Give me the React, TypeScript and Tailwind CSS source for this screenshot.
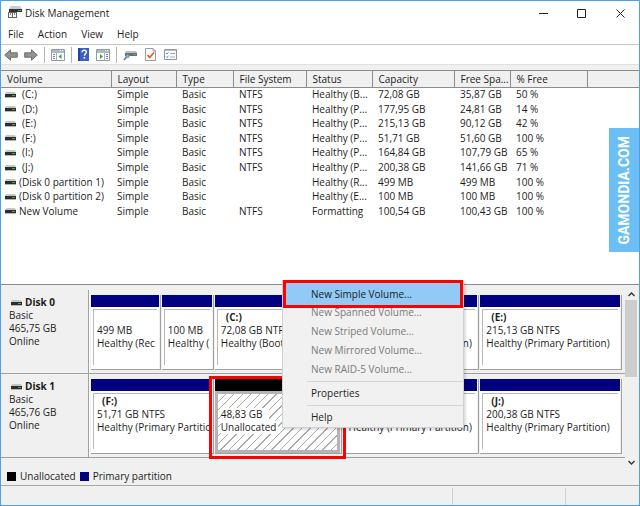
import React from "react";

type Volume = [string, string, string, string, string, string];

const volumes: Volume[] = [
  ["(C:)", "NTFS", "Healthy (B...", "72,08 GB", "35,87 GB", "50 %"],
  ["(D:)", "NTFS", "Healthy (P...", "177,95 GB", "24,81 GB", "14 %"],
  ["(E:)", "NTFS", "Healthy (P...", "215,13 GB", "90,12 GB", "42 %"],
  ["(F:)", "NTFS", "Healthy (P...", "51,71 GB", "51,60 GB", "100 %"],
  ["(I:)", "NTFS", "Healthy (P...", "164,84 GB", "107,79 GB", "65 %"],
  ["(J:)", "NTFS", "Healthy (P...", "200,38 GB", "141,66 GB", "71 %"],
  ["(Disk 0 partition 1)", "", "Healthy (R...", "499 MB", "499 MB", "100 %"],
  ["(Disk 0 partition 2)", "", "Healthy (E...", "100 MB", "100 MB", "100 %"],
  ["New Volume", "NTFS", "Formatting", "100,54 GB", "100,43 GB", "100 %"],
];

const headings = ["Volume", "Layout", "Type", "File System", "Status", "Capacity", "Free Spa...", "% Free", ""];

function DriveIcon() {
  return (
    <svg className="h-[8px] w-[11px] shrink-0" viewBox="0 0 11 8" aria-hidden="true">
      <path d="M1 1h9l1 2H0z" fill="#c4c6c9" />
      <path d="M0 3h11v3H0z" fill="#2b2d2e" />
      <path d="M0 6h11v1H0z" fill="#b4b6b8" />
      <path d="M7 4h3v1H7z" fill="#3fae3f" />
    </svg>
  );
}

function AppIcon() {
  return (
    <svg className="h-4 w-4" viewBox="0 0 16 16" aria-hidden="true">
      <path d="M4 1h9l2 3H2z" fill="#c9cbcd" />
      <path d="M2 4h13v3H2z" fill="#303234" />
      <path d="M11 5h3v1h-3z" fill="#44b544" />
      <path d="M1 7h9v6H1z" fill="#606366" />
      <path d="M2 8h3v4H2zM6 8h3v4H6z" fill="#fafafa" />
      <path d="M3 8h1v2H3zM7 8h1v2H7z" fill="#888" />
    </svg>
  );
}

function Arrow({ right = false }: { right?: boolean }) {
  return (
    <svg className={right ? "h-3 w-[14px] rotate-180" : "h-3 w-[14px]"} viewBox="0 0 14 12" aria-hidden="true">
      <path d="M.7 6 6.5.8v3h6.8v4.4H6.5v3z" fill="#929292" stroke="#6c6c6c" strokeWidth="1" />
    </svg>
  );
}

function PaneIcon({ mirrored = false }: { mirrored?: boolean }) {
  return (
    <svg className="h-3 w-[14px]" viewBox="0 0 14 12" aria-hidden="true">
      <path d="M.5.5h13v11H.5z" fill="#fff" stroke="#9199a3" />
      <path d="M1 1h12v3H1z" fill="#adb7c5" />
      <path d="M9 1h1v1H9zM11 1h1v1h-1z" fill="#fff" />
      {mirrored ? (
        <g>
          <path d="M8.5 4v7.500" stroke="#a6adb6" />
          <path d="M10 5.500h2M10 7.500h2M10 9.500h2" stroke="#6b88ad" />
          <path d="m4 5 3 2.500L4 10z" fill="#35a92d" />
        </g>
      ) : (
        <g>
          <path d="M5.500 4v7.500" stroke="#a6adb6" />
          <path d="M2 5.500h2M2 7.500h2M2 9.500h2" stroke="#6b88ad" />
          <path d="m10.500 5-3 2.500 3 2.500z" fill="#35a92d" />
        </g>
      )}
    </svg>
  );
}

function HelpIcon() {
  return (
    <svg className="h-[13px] w-[11px]" viewBox="0 0 11 13" aria-hidden="true">
      <path d="M0 0h11v13H0z" fill="#3a5fc8" />
      <path d="M0 0h2v13H0z" fill="#2344a0" />
      <path d="M4 4.300C4 2.800 5 2.200 6.200 2.200s2.200.7 2.200 1.900c0 1.500-2 1.700-2 3.600" fill="none" stroke="#fff" strokeWidth="1.400" />
      <path d="M5.600 9h1.600v1.600H5.600z" fill="#fff" />
    </svg>
  );
}

function RescanIcon() {
  return (
    <svg className="h-3 w-[14px]" viewBox="0 0 14 12" aria-hidden="true">
      <path d="M3 2h10l1 2H2z" fill="#b9c1c6" />
      <path d="M2 4h12v3H2z" fill="#687077" />
      <path d="M10 5h3v1h-3z" fill="#45b64a" />
      <circle cx="4.500" cy="7" r="1.700" fill="#8fb4cf" stroke="#5c7f99" strokeWidth=".8" />
      <path d="M3.300 8.300 1 11" stroke="#65798a" strokeWidth="1.500" />
    </svg>
  );
}

function CheckPageIcon() {
  return (
    <svg className="h-[13px] w-[11px]" viewBox="0 0 11 13" aria-hidden="true">
      <path d="M.5.5h7.500l2.500 2.500v9.500H.5z" fill="#fff" stroke="#9c9c9c" />
      <path d="M8 .5V3h2.500" fill="none" stroke="#9c9c9c" />
      <path d="m2.500 7 2.200 2.500L9 4.500" fill="none" stroke="#e4581e" strokeWidth="1.600" />
    </svg>
  );
}

function ListIcon() {
  return (
    <svg className="h-[11px] w-[13px]" viewBox="0 0 13 11" aria-hidden="true">
      <path d="M.5.5h12v10H.5z" fill="#fff" stroke="#8c949d" />
      <path d="M1 1h11v1H1z" fill="#b7c0ca" />
      <path d="m2 4 1 1 1.500-1.800M2 7.500l1 1 1.500-1.800" fill="none" stroke="#3c82c8" strokeWidth=".9" />
      <path d="M6 4.500h5M6 8h5" stroke="#a1a8af" />
    </svg>
  );
}

const toolButton = "flex h-4 items-center justify-center";

function Divider() {
  return <span className="h-4 w-px bg-[#b4b4b4]" />;
}

type PartitionProps = { name?: string; size: string; status: string };

function Partition({ name, size, status }: PartitionProps) {
  return (
    <div className="flex min-w-0 flex-col border-r border-b border-[#a0a0a0] pr-px">
      <div className="h-3 bg-[#000080]" />
      <div className="flex min-w-0 flex-1 bg-white px-[2px] pt-[2px] pb-1">
        <div className="w-full min-w-0 overflow-hidden border-t border-l border-[#b8b8b8] pt-px pl-[3px] whitespace-nowrap">
          <p className="h-[13px] pl-[5px] font-bold">{name}</p>
          <p>{size}</p>
          <p>{status}</p>
        </div>
      </div>
    </div>
  );
}

function Unallocated() {
  return (
    <div className="relative flex min-w-0 flex-col border-r border-b border-[#a0a0a0] pr-px">
      <div className="h-3 bg-black" />
      <div className="flex flex-1 flex-col items-start border-3 border-[#b4b4b4] bg-[repeating-linear-gradient(135deg,#fff_0px,#fff_5px,#aaa_5px,#aaa_6px)] pt-[14px] pl-[3px] whitespace-nowrap">
        <p className="bg-white pr-[6px]">48,83 GB</p>
        <p className="bg-white pr-[2px]">Unallocated</p>
      </div>
      <div className="absolute -top-[3px] -right-[5px] -bottom-[6px] -left-[6px] border-3 border-[#f00]" />
    </div>
  );
}

function DiskRow({ name, size, columns, children }: { name: string; size: string; columns: string; children: React.ReactNode }) {
  return (
    <section className="flex h-[84px] border-b border-[#a0a0a0]">
      <div className="w-[88px] shrink-0 border-r border-[#a0a0a0] pt-[6px] pl-2">
        <h2 className="flex items-center gap-[3px] pl-[2px] font-bold"><DriveIcon />{name}</h2>
        <p>Basic</p>
        <p>{size}</p>
        <p>Online</p>
      </div>
      <div className={"grid min-w-0 flex-1 gap-px border-l border-white pt-[5px] pr-[3px] pb-[3px] pl-px " + columns}>{children}</div>
    </section>
  );
}

function MenuItem({ children, disabled = false }: { children: string; disabled?: boolean }) {
  return (
    <button role="menuitem" disabled={disabled} className="block h-[19px] w-full pl-7 text-left disabled:text-[#7a7a7a]">
      {children}
    </button>
  );
}

function ContextMenu() {
  return (
    <div role="menu" className="absolute top-[279px] left-[281px] w-[182px] border border-[#d0d0d0] bg-[#f1f1f1] shadow-[2px_2px_2px_#0002]">
      <button role="menuitem" className="-mt-px block h-7 w-[180px] border-3 border-[#f00] bg-[#91c9f7] pl-[25px] text-left">
        New Simple Volume...
      </button>
      <div className="-mt-[5px]">
        <MenuItem disabled>New Spanned Volume...</MenuItem>
        <MenuItem disabled>New Striped Volume...</MenuItem>
        <MenuItem disabled>New Mirrored Volume...</MenuItem>
        <MenuItem disabled>New RAID-5 Volume...</MenuItem>
      </div>
      <hr className="my-[2px] ml-6 border-[#d4d4d4]" />
      <MenuItem>Properties</MenuItem>
      <hr className="my-[2px] ml-6 border-[#d4d4d4]" />
      <MenuItem>Help</MenuItem>
    </div>
  );
}

export default function App() {
  return (
    <div className="relative flex min-h-screen flex-col border border-[#4aa3e8] bg-[#f0f0f0] font-['Open_Sans','Noto_Sans',sans-serif] text-[10px] leading-[13px] text-[#1c1c1c]">
      <header className="flex h-6 items-center bg-white pl-[6px]">
        <AppIcon />
        <h1 className="ml-[2px]">Disk Management</h1>
        <div className="ml-auto flex">
          <button aria-label="Minimize" className="flex h-6 w-[38px] items-center justify-center">
            <svg className="h-[9px] w-[9px]" viewBox="0 0 9 9"><path d="M0 4.500h9" stroke="#222" /></svg>
          </button>
          <button aria-label="Maximize" className="flex h-6 w-[39px] items-center justify-center">
            <svg className="h-[9px] w-[9px]" viewBox="0 0 9 9"><path d="M.5.500h8v8h-8z" fill="none" stroke="#222" /></svg>
          </button>
          <button aria-label="Close" className="flex h-6 w-[38px] items-center justify-center">
            <svg className="h-[9px] w-[9px]" viewBox="0 0 9 9"><path d="m.5.500 8 8m0-8-8 8" stroke="#222" /></svg>
          </button>
        </div>
      </header>
      <nav className="flex h-5 items-center gap-[14px] border-b border-[#c4c4c4] bg-white pl-[7px]">
        <button>File</button>
        <button>Action</button>
        <button>View</button>
        <button>Help</button>
      </nav>
      <div role="toolbar" className="flex h-5 items-center gap-[6px] border-b border-[#e0e0e0] bg-white pl-[3px]">
        <button aria-label="Back" className={toolButton}><Arrow /></button>
        <button aria-label="Forward" className={toolButton}><Arrow right /></button>
        <Divider />
        <button aria-label="Show console tree" className={toolButton}><PaneIcon /></button>
        <Divider />
        <div className="flex items-center gap-[7px]">
          <button aria-label="Help" className={toolButton}><HelpIcon /></button>
          <button aria-label="Show action pane" className={toolButton}><PaneIcon mirrored /></button>
        </div>
        <Divider />
        <div className="flex items-center gap-2">
          <button aria-label="Rescan disks" className={toolButton}><RescanIcon /></button>
          <button aria-label="Check" className={toolButton}><CheckPageIcon /></button>
          <button aria-label="Properties" className={toolButton}><ListIcon /></button>
        </div>
      </div>

      <main className="flex flex-1 flex-col pt-[5px]">
        <div className="flex-1 border-t border-b border-[#8c8c8c] bg-white">
          <table className="w-full table-fixed border-collapse text-left whitespace-nowrap">
            <colgroup>
              <col className="w-[110px]" /><col className="w-[65px]" /><col className="w-[57px]" />
              <col className="w-[73px]" /><col className="w-[66px]" /><col className="w-[82px]" />
              <col className="w-[56px]" /><col className="w-[77px]" /><col />
            </colgroup>
            <thead>
              <tr className="h-4 bg-[#f0f0f0]">
                {headings.map((h, i) => (
                  <th key={i} className="border-r border-b border-[#8c8c8c] p-0 pt-px pl-[6px] font-normal last:border-r-0">{h}</th>
                ))}
              </tr>
            </thead>
          </table>
          <table className="h-[131px] w-full table-fixed border-collapse text-left whitespace-nowrap">
            <colgroup>
              <col className="w-[110px]" /><col className="w-[65px]" /><col className="w-[57px]" />
              <col className="w-[73px]" /><col className="w-[66px]" /><col className="w-[82px]" />
              <col className="w-[56px]" /><col className="w-[77px]" /><col />
            </colgroup>
            <tbody>
              {volumes.map(([name, fs, status, capacity, free, percent]) => (
                <tr key={name}>
                  <td className="p-0 pl-1">
                    <span className="flex items-center gap-[3px]">
                      <DriveIcon />
                      <span className={name.length < 5 ? "pl-[3px]" : ""}>{name}</span>
                    </span>
                  </td>
                  <td className="p-0 pl-[6px]">Simple</td>
                  <td className="p-0 pl-[6px]">Basic</td>
                  <td className="p-0 pl-[6px]">{fs}</td>
                  <td className="p-0 pl-[6px]">{status}</td>
                  <td className="p-0 pl-[6px]">{capacity}</td>
                  <td className="p-0 pl-[6px]">{free}</td>
                  <td className="p-0 pl-[6px]">{percent}</td>
                  <td />
                </tr>
              ))}
            </tbody>
          </table>
        </div>

        <div className="flex pt-[3px]">
          <div className="h-[180px] min-w-0 flex-1 pt-[2px]">
            <DiskRow name="Disk 0" size="465,75 GB" columns="grid-cols-[70fr_52fr_127fr_137fr_142fr]">
              <Partition size="499 MB" status="Healthy (Rec" />
              <Partition size="100 MB" status="Healthy (" />
              <Partition name="(C:)" size="72,08 GB NTFS" status="Healthy (Boot, Page" />
              <Partition name="(D:)" size="177,95 GB NTFS" status="Healthy (Primary Partition)" />
              <Partition name="(E:)" size="215,13 GB NTFS" status="Healthy (Primary Partition)" />
            </DiskRow>
            <DiskRow name="Disk 1" size="465,76 GB" columns="grid-cols-[123fr_127fr_137fr_142fr]">
              <Partition name="(F:)" size="51,71 GB NTFS" status="Healthy (Primary Partitio" />
              <Unallocated />
              <Partition name="(I:)" size="164,84 GB NTFS" status="Healthy (Primary Partition)" />
              <Partition name="(J:)" size="200,38 GB NTFS" status="Healthy (Primary Partition)" />
            </DiskRow>
          </div>
          <div className="mr-[2px] flex w-3 flex-col items-center">
            <button aria-label="Scroll up" className="flex h-3 items-center">
              <svg className="h-[5px] w-[7px]" viewBox="0 0 7 5"><path d="m.5 4 3-3 3 3" fill="none" stroke="#333" strokeWidth="1.400" /></svg>
            </button>
            <div className="h-[77px] w-3 bg-[#cdcdcd]" />
            <button aria-label="Scroll down" className="mt-auto flex h-3 items-center">
              <svg className="h-[5px] w-[7px]" viewBox="0 0 7 5"><path d="m.5 1 3 3 3-3" fill="none" stroke="#333" strokeWidth="1.400" /></svg>
            </button>
          </div>
        </div>
        <div className="flex h-[18px] items-center gap-1 border-b border-[#a8a8a8] pl-[6px]">
          <span className="h-[9px] w-[9px] bg-black" />
          <span>Unallocated</span>
          <span className="h-[9px] w-[9px] bg-[#000080]" />
          <span>Primary partition</span>
        </div>
      </main>
      <footer className="flex h-[19px] pt-[2px]">
        <div className="flex-1" />
        <div className="w-[113px] border-l border-[#d0d0d0]" />
        <div className="w-[74px] border-l border-[#d0d0d0]" />
      </footer>

      <aside className="absolute top-[127px] right-0 flex h-[124px] w-[30px] items-center justify-center bg-[#6cbff4]">
        <span className="rotate-180 font-['Roboto',sans-serif] text-[14px] leading-[14px] font-bold text-white [writing-mode:vertical-rl]">GAMONDIA.COM</span>
      </aside>
      <ContextMenu />
    </div>
  );
}
